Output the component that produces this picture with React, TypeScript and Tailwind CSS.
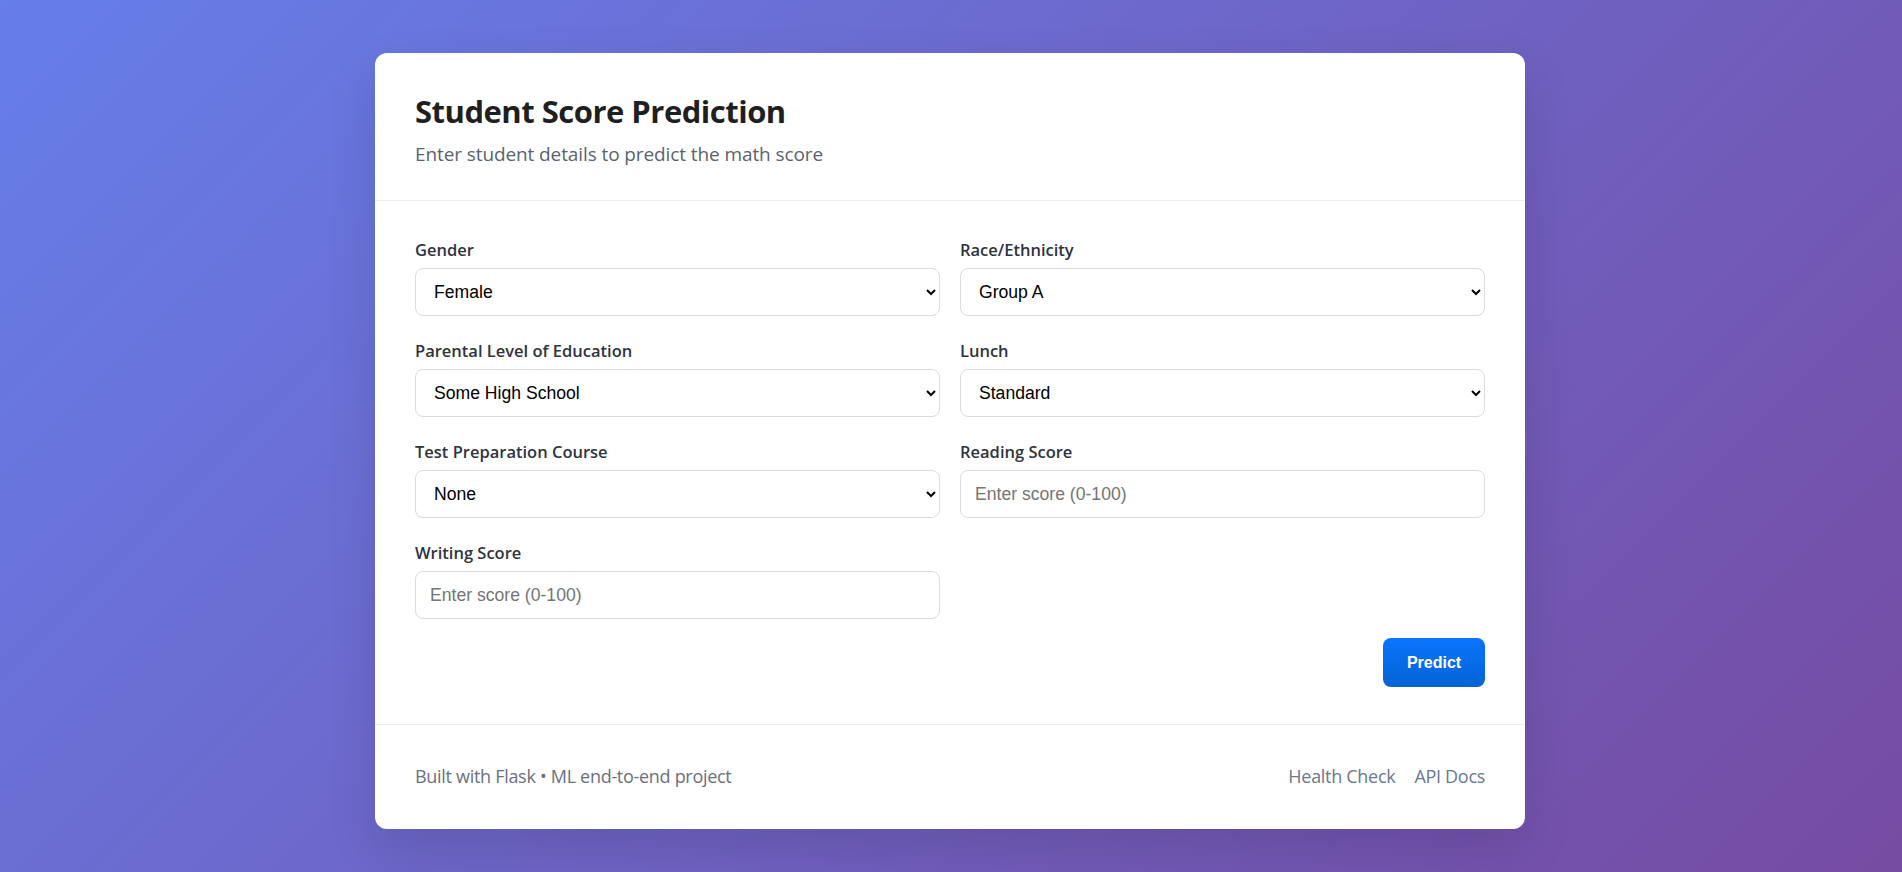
import { useState } from "react";

type Field = {
  id: string;
  label: string;
  options?: string[];
};

const fields: Field[] = [
  { id: "gender", label: "Gender", options: ["Female", "Male"] },
  { id: "race", label: "Race/Ethnicity", options: ["Group A", "Group B", "Group C", "Group D", "Group E"] },
  {
    id: "parent",
    label: "Parental Level of Education",
    options: [
      "Some High School",
      "High School",
      "Some College",
      "Associate's Degree",
      "Bachelor's Degree",
      "Master's Degree",
    ],
  },
  { id: "lunch", label: "Lunch", options: ["Standard", "Free/Reduced"] },
  { id: "prep", label: "Test Preparation Course", options: ["None", "Completed"] },
  { id: "reading", label: "Reading Score" },
  { id: "writing", label: "Writing Score" },
];

const controlClass =
  "block h-12 w-full rounded-lg border border-[#d9dbe1] bg-white px-[14px] font-['Liberation_Sans',Arial,sans-serif] text-[17.6px] text-black outline-none";

export default function App() {
  const [values, setValues] = useState<Record<string, string>>({});

  return (
    <div className="min-h-screen bg-[linear-gradient(135deg,#667eea_0%,#764ba2_100%)] pt-[53px] pb-10 font-['Open_Sans','Noto_Sans',sans-serif]">
      <div className="ml-[375px] w-[1150px] rounded-xl bg-white shadow-[0_20px_50px_rgba(0,0,0,0.12)]">
        <header className="border-b border-[#eeeef0] px-10 pt-[39px] pb-[32px]">
          <h1 className="text-[31px] leading-[38px] font-bold tracking-[-0.5px] text-[#1f1f1f]">Student Score Prediction</h1>
          <p className="mt-[11px] text-[19px] leading-[27px] tracking-[-0.1px] text-[#5b6270]">
            Enter student details to predict the math score
          </p>
        </header>

        <form className="border-b border-[#eeeef0] px-10 pt-[38px] pb-[37px]" onSubmit={(e) => e.preventDefault()}>
          <div className="grid grid-cols-2 gap-x-5 gap-y-6">
            {fields.map((field) => (
              <div key={field.id}>
                <label
                  htmlFor={field.id}
                  className="mb-2 block text-[16.5px] leading-[21px] font-semibold text-[#2f3340]"
                >
                  {field.label}
                </label>
                {field.options ? (
                  <select
                    id={field.id}
                    className={controlClass}
                    value={values[field.id] ?? field.options[0]}
                    onChange={(e) => setValues({ ...values, [field.id]: e.target.value })}
                  >
                    {field.options.map((opt) => (
                      <option key={opt}>{opt}</option>
                    ))}
                  </select>
                ) : (
                  <input
                    id={field.id}
                    type="number"
                    placeholder="Enter score (0-100)"
                    className={controlClass + " placeholder:text-[#757575]"}
                  />
                )}
              </div>
            ))}
          </div>
          <div className="mt-[19px] flex justify-end">
            <button
              type="submit"
              className="h-[49px] w-[102px] rounded-lg bg-linear-to-b from-[#0b75ff] to-[#0563d4] font-['Liberation_Sans',Arial,sans-serif] text-base font-bold text-white"
            >
              Predict
            </button>
          </div>
        </form>

        <footer className="flex items-center justify-between px-10 pt-[38px] pb-[39px] text-[18px] leading-[27px] tracking-[-0.3px]">
          <span className="text-[#6b7080]">Built with Flask • ML end-to-end project</span>
          <div className="flex gap-[19px] text-[#6a7890]">
            <a href="#">Health Check</a>
            <a href="#">API Docs</a>
          </div>
        </footer>
      </div>
    </div>
  );
}
